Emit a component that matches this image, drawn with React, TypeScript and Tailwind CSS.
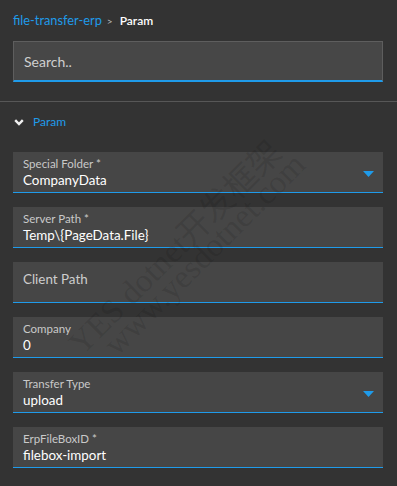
import React from 'react';

const font = { fontFamily: 'Lato, "Noto Sans", sans-serif' };

type Field = {
  label: string;
  value?: string;
  required?: boolean;
  select?: boolean;
};

const fields: Field[] = [
  { label: 'Special Folder', value: 'CompanyData', required: true, select: true },
  { label: 'Server Path', value: 'Temp\\{PageData.File}', required: true },
  { label: 'Client Path' },
  { label: 'Company', value: '0' },
  { label: 'Transfer Type', value: 'upload', select: true },
  { label: 'ErpFileBoxID', value: 'filebox-import', required: true },
];

function Caret() {
  return (
    <svg width="11" height="6" viewBox="0 0 11 6" className="absolute right-[9px] top-[19px]">
      <path d="M0 0 H11 L5.5 6 Z" fill="#1f9bea" />
    </svg>
  );
}

function FormField({ field }: { field: Field }) {
  const label = field.label + (field.required ? ' *' : '');
  return (
    <div className="relative h-[41px] bg-[#464646] border-b border-[#1f9bea] px-[10px]">
      {field.value !== undefined ? (
        <>
          <div className="pt-[5px] text-[11.5px] leading-[14px] text-[#c9c9c9]">{label}</div>
          <div className="text-[13.4px] leading-[18px] text-white">{field.value}</div>
        </>
      ) : (
        <div className="pt-[8px] text-[13.4px] leading-[18px] text-[#cdcdcd]">{label}</div>
      )}
      {field.select && <Caret />}
    </div>
  );
}

export default function App() {
  return (
    <div className="relative w-[397px] h-[486px] overflow-hidden bg-[#333333]" style={font}>
      <div className="px-[13px] pt-[13px] pr-[14px]">
        <div className="h-[16px] flex items-center gap-[5px] text-[12.8px]">
          <span className="text-[#1f9bea]">file-transfer-erp</span>
          <span className="text-[#bdbdbd] text-[10px]">&gt;</span>
          <span className="ml-[2px] text-white font-semibold text-[12px]">Param</span>
        </div>
        <div className="mt-[12px] h-[41px] flex items-center bg-[#474747] border border-[#5e5e5e] border-b-2 border-b-[#1f9bea] px-[10px] text-[14px] text-[#cfcfcf]">
          Search..
        </div>
      </div>

      <div className="mt-[19px] h-px bg-[#575757]" />

      <div className="h-[40px] flex items-center pl-[14px] gap-[9px]">
        <svg width="10" height="7" viewBox="0 0 10 7">
          <path d="M1.2 1.2 L5 5 L8.8 1.2" fill="none" stroke="#f0f0f0" strokeWidth="2.4" />
        </svg>
        <span className="text-[12px] text-[#1f9bea]">Param</span>
      </div>

      <div className="mt-[10px] pl-[13px] pr-[14px] flex flex-col gap-[14px]">
        {fields.map((f) => (
          <FormField key={f.label} field={f} />
        ))}
      </div>

      {/* watermark */}
      <div
        className="pointer-events-none absolute left-[66px] top-[340px] origin-top-left -rotate-45 whitespace-nowrap text-[33px] leading-[25px] text-black/10"
        style={{ fontFamily: '"Liberation Serif", "Noto Sans CJK SC", serif' }}
      >
        <div>YES dotnet开发框架</div>
        <div className="pl-[24px]">www.yesdotnet.com</div>
      </div>
    </div>
  );
}
